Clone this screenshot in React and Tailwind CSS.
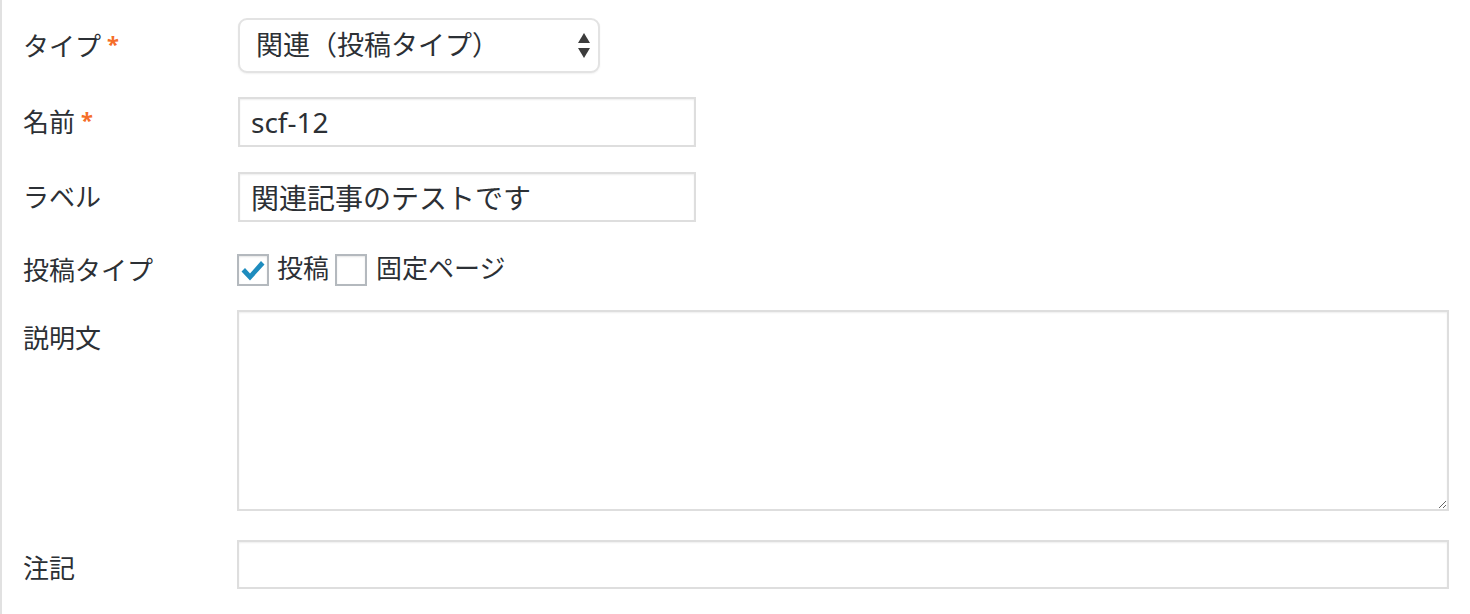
export default function App() {
  const jp = { fontFamily: '"Noto Sans", "Noto Sans CJK JP", sans-serif' };

  return (
    <div className="min-h-screen bg-white border-l-2 border-[#e1e1e1] pt-[18px] pr-[21px] text-[#2c3035]" style={jp}>
      {/* タイプ */}
      <div className="flex items-center h-[55px]">
        <div className="w-[235px] pl-[21px] text-[26px] leading-[36px] flex items-center">
          タイプ<span className="text-[#f56e28] text-[22px] font-bold ml-[6px] -mt-[6px]">*</span>
        </div>
        <div className="relative ml-[1px] w-[362px] h-[55px]">
          <select className="appearance-none w-full h-full rounded-[9px] border-2 border-[#e3e3e3] bg-white pl-[16px] pr-[40px] text-[27px] text-[#2c3035] shadow-[0_1px_2px_rgba(0,0,0,0.06)] outline-none" style={jp}>
            <option>関連（投稿タイプ）</option>
          </select>
          <svg className="absolute right-[9px] top-[15px] pointer-events-none" width="14" height="26" viewBox="0 0 14 26">
            <path d="M7 0 L13 10 L1 10 Z" fill="#3c3c3c" />
            <path d="M1 15 L13 15 L7 25 Z" fill="#3c3c3c" />
          </svg>
        </div>
      </div>

      {/* 名前 */}
      <div className="flex items-center h-[50px] mt-6">
        <div className="w-[235px] pl-[21px] text-[26px] leading-[36px] flex items-center">
          名前<span className="text-[#f56e28] text-[22px] font-bold ml-[6px] -mt-[6px]">*</span>
        </div>
        <input
          defaultValue="scf-12"
          className="ml-[1px] w-[458px] h-[50px] border-2 border-[#dedede] bg-white px-[11px] text-[28px] text-[#2c3035] shadow-[inset_0_1px_2px_rgba(0,0,0,0.07)] outline-none"
          style={jp}
        />
      </div>

      {/* ラベル */}
      <div className="flex items-center h-[50px] mt-[25px]">
        <div className="w-[235px] pl-[21px] text-[26px] leading-[36px]">ラベル</div>
        <input
          defaultValue="関連記事のテストです"
          className="ml-[1px] w-[458px] h-[50px] border-2 border-[#dedede] bg-white px-[11px] text-[28px] text-[#2c3035] shadow-[inset_0_1px_2px_rgba(0,0,0,0.07)] outline-none"
          style={jp}
        />
      </div>

      {/* 投稿タイプ */}
      <div className="flex items-center h-[32px] mt-8">
        <div className="w-[235px] pl-[21px] text-[26px] leading-[36px]">投稿タイプ</div>
        <label className="flex items-center">
          <span className="w-[32px] h-[32px] border-2 border-[#b4b9be] bg-white shadow-[inset_0_1px_2px_rgba(0,0,0,0.1)] flex items-center justify-center">
            <svg width="26" height="24" viewBox="0 0 26 24" className="mt-[2px]">
              <path d="M1.5 12.5 L5 9 L10 14.5 L21 2 L24.5 5.5 L10 21.5 Z" fill="#1e8cbe" />
            </svg>
          </span>
          <span className="ml-[8px] text-[26px] leading-[32px] -mt-[4px]">投稿</span>
        </label>
        <label className="flex items-center ml-[6px]">
          <span className="w-[32px] h-[32px] border-2 border-[#b4b9be] bg-white shadow-[inset_0_1px_2px_rgba(0,0,0,0.1)]" />
          <span className="ml-[9px] text-[26px] leading-[32px] -mt-[4px]">固定ページ</span>
        </label>
      </div>

      {/* 説明文 */}
      <div className="flex items-start mt-6">
        <div className="w-[235px] pl-[21px] pt-[10px] text-[26px] leading-[36px]">説明文</div>
        <textarea
          className="flex-1 h-[201px] border-2 border-[#dedede] bg-white p-[10px] text-[28px] shadow-[inset_0_1px_2px_rgba(0,0,0,0.07)] outline-none"
          style={jp}
        />
      </div>

      {/* 注記 */}
      <div className="flex items-center h-[49px] mt-[29px]">
        <div className="w-[235px] pl-[21px] pt-[6px] text-[26px] leading-[36px]">注記</div>
        <input
          className="flex-1 h-[49px] border-2 border-[#dedede] bg-white px-[11px] text-[28px] shadow-[inset_0_1px_2px_rgba(0,0,0,0.07)] outline-none"
          style={jp}
        />
      </div>
    </div>
  );
}
